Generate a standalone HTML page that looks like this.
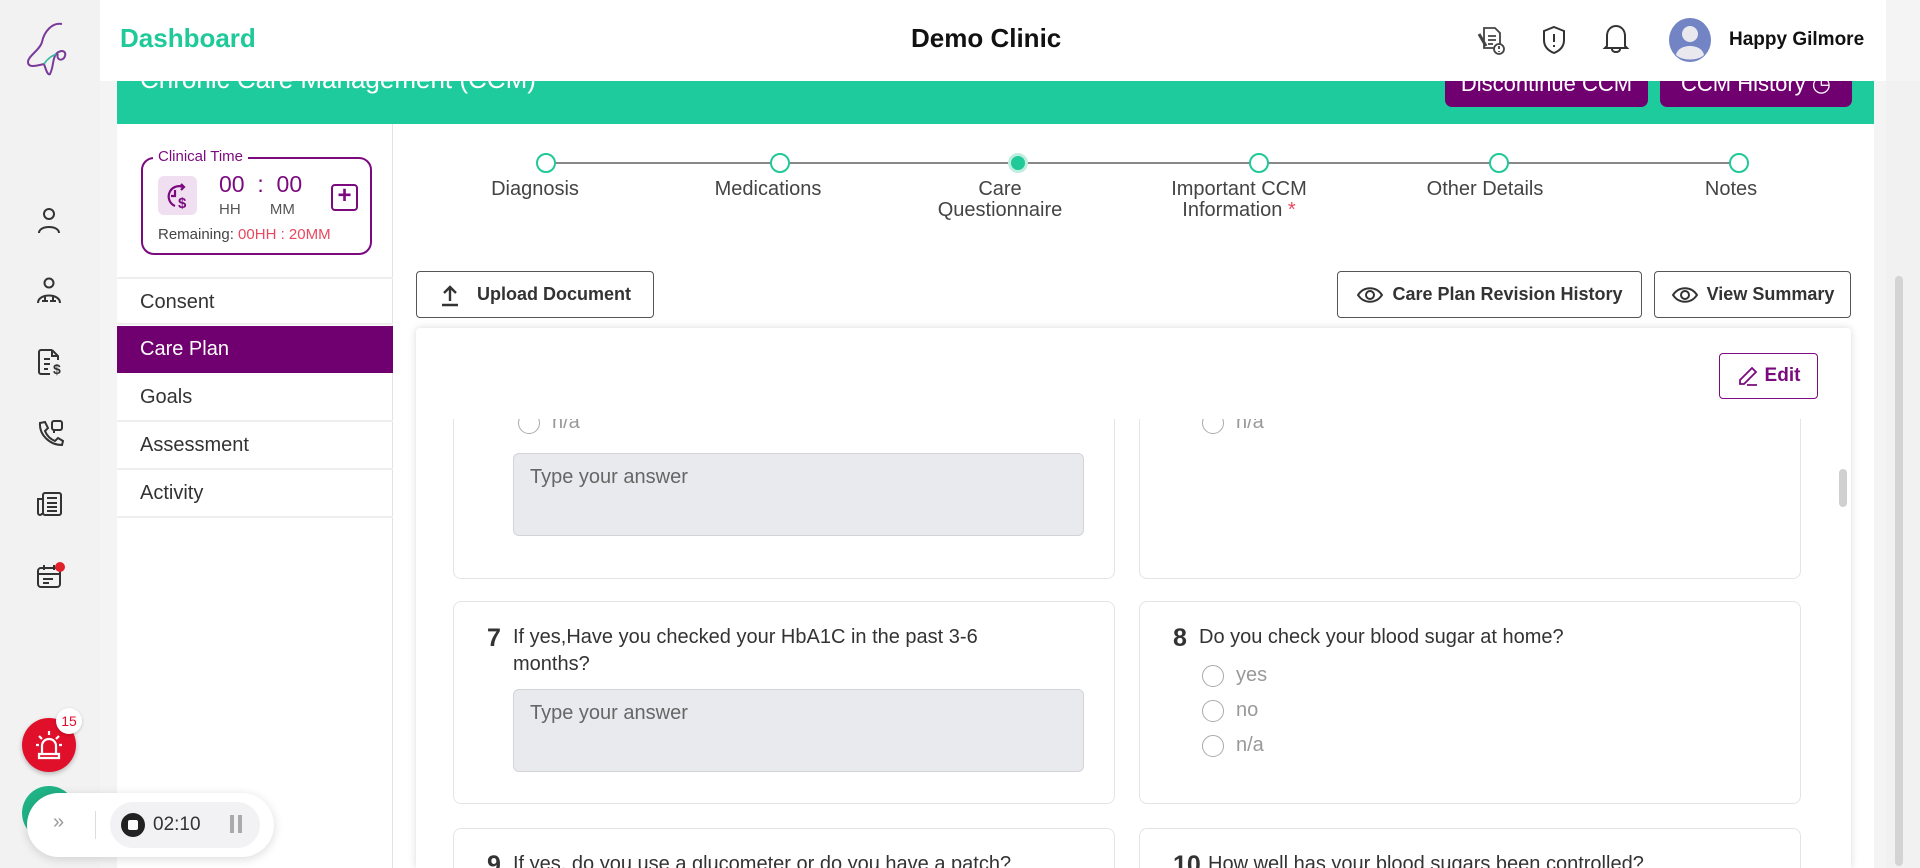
<!DOCTYPE html>
<html style="overflow:hidden"><head><meta charset="utf-8"><style>
*{box-sizing:border-box;margin:0;padding:0}
html,body{overflow:hidden}
body{width:1920px;height:868px;overflow:hidden;background:#f4f4f5;font-family:"Liberation Sans",sans-serif;position:relative;color:#333}
.a{position:absolute}
.side{left:0;top:0;width:100px;height:868px;background:#f2f2f2}
.hdr{left:100px;top:0;width:1786px;height:81px;background:#fff;z-index:5}
.band{left:117px;top:50px;width:1757px;height:74px;background:#1ecb9c}
.pbtn{background:#700070;color:#fff;border-radius:0 0 7px 7px;font-size:22px;text-align:center;line-height:28px}
.main{left:117px;top:124px;width:1757px;height:744px;background:#fff}
.lp{left:117px;top:124px;width:276px;height:744px;border-right:1px solid #e3e3e3;background:#fff}
.mi{left:117px;width:276px;height:48px;border-bottom:2px solid #eee;font-size:20px;line-height:46px;padding-left:23px;color:#333}
.step{top:153px;width:20px;height:20px;border:2px solid #20c997;border-radius:50%;background:#fff}
.lbl{font-size:20px;color:#444;text-align:center;line-height:21px;width:240px}
.obtn{border:1.5px solid #555;border-radius:4px;background:#fff;font-weight:bold;font-size:18px;color:#333;display:flex;align-items:center;justify-content:center;gap:8px}
.card{background:#fff;border:1px solid #e4e4e4;border-radius:8px}
.ta{background:#e9eaee;border:1px solid #d4d4d8;border-radius:6px;font-size:20px;color:#666;padding:12px 16px}
.q{font-size:20px;color:#333;line-height:27px}
.qn{font-size:25px;font-weight:bold;color:#333}
.rd{width:22px;height:22px;border:1.5px solid #aaa;border-radius:50%;background:#fff}
.rl{font-size:20px;color:#999}
</style></head><body>
<div class="a side"></div>
<svg class="a" style="left:22px;top:18px" width="56" height="60" viewBox="0 0 56 60"><path d="M40 6 C30 4 22 14 20 24 C18 32 6 38 6 44 C6 50 14 48 22 46 C24 52 26 58 28 56 C32 48 30 42 34 36 C40 30 46 34 42 40 C38 44 34 40 36 36" fill="none" stroke="#7a3a9a" stroke-width="2"/><path d="M22 46 C26 40 30 38 34 36" fill="none" stroke="#3ab8a0" stroke-width="1.6"/></svg>
<svg class="a" style="left:36px;top:207px" width="26" height="28" viewBox="0 0 26 28" fill="none" stroke="#333" stroke-width="2"><circle cx="13" cy="7" r="5"/><path d="M3 26 C3 18 23 18 23 26"/></svg>
<svg class="a" style="left:36px;top:277px" width="26" height="28" viewBox="0 0 26 28" fill="none" stroke="#333" stroke-width="2"><circle cx="13" cy="6" r="4.5"/><path d="M2 26 C2 16 24 16 24 26 M9 18 v6 M17 18 v6 M6 24 h6 M14 24 h6"/></svg>
<svg class="a" style="left:36px;top:348px" width="28" height="28" viewBox="0 0 28 28" fill="none" stroke="#333" stroke-width="2"><path d="M16 2 H5 a2 2 0 0 0 -2 2 V24 a2 2 0 0 0 2 2 H14 M16 2 L22 8 V12 M16 2 V8 H22 M8 11 h6 M8 16 h6 M8 21 h4"/><text x="17" y="26" font-size="14" font-weight="bold" fill="#333" stroke="none" font-family="Liberation Sans">$</text></svg>
<svg class="a" style="left:36px;top:419px" width="28" height="28" viewBox="0 0 28 28" fill="none" stroke="#333" stroke-width="2"><path d="M4 4 L9 3 L12 9 L9 12 C11 17 14 20 19 22 L22 19 L27 22 L26 26 C14 26 3 16 4 4Z"/><rect x="16" y="2" width="10" height="9" rx="2"/><path d="M18 11 v3"/></svg>
<svg class="a" style="left:35px;top:490px" width="28" height="28" viewBox="0 0 28 28" fill="none" stroke="#333" stroke-width="2"><rect x="8" y="3" width="18" height="22" rx="2"/><path d="M8 9 H3 V23 a2 2 0 0 0 4 0 M12 8 h10 M12 13 h10 M12 17 h10 M12 21 h10"/></svg>
<svg class="a" style="left:35px;top:561px" width="30" height="30" viewBox="0 0 30 30" fill="none" stroke="#333" stroke-width="2"><rect x="3" y="7" width="22" height="19" rx="3"/><path d="M3 13 h22 M9 4 v5 M19 4 v5 M8 18 h10 M8 22 h6"/><circle cx="25" cy="6" r="5" fill="#e0202b" stroke="none"/></svg>
<div class="a hdr">
 <div class="a" style="left:20px;top:23px;font-size:26px;font-weight:bold;color:#1fc99a">Dashboard</div>
 <div class="a" style="left:811px;top:23px;font-size:26px;font-weight:bold;color:#111">Demo Clinic</div>
 <svg class="a" style="left:1376px;top:24px" width="30" height="32" viewBox="0 0 30 32" fill="none" stroke="#444" stroke-width="1.8"><path d="M8 4 H19 L24 9 V24 H8 Z M12 12 h8 M12 16 h8 M12 20 h5"/><path d="M3 10 L10 22" stroke-width="3"/><circle cx="23" cy="25" r="5" fill="#fff"/><path d="M23 22 v3 M23 27 v1"/></svg>
 <svg class="a" style="left:1441px;top:24px" width="26" height="32" viewBox="0 0 26 32" fill="none" stroke="#333" stroke-width="2"><path d="M13 3 L23 7 V16 C23 23 18 27 13 29 C8 27 3 23 3 16 V7 Z"/><path d="M13 10 v8 M13 21 v2"/></svg>
 <svg class="a" style="left:1501px;top:22px" width="30" height="34" viewBox="0 0 30 34" fill="none" stroke="#333" stroke-width="2"><path d="M6 24 V14 C6 8 10 4 15 4 C20 4 24 8 24 14 V24 L26 26 H4 Z M11 27 C11 31 19 31 19 27"/></svg>
 <svg class="a" style="left:1568px;top:17px" width="44" height="46" viewBox="0 0 44 46"><ellipse cx="22" cy="23" rx="21" ry="22" fill="#7284c4"/><circle cx="22" cy="17" r="8" fill="#e8e8ee"/><path d="M8 38 C10 26 34 26 36 38 C30 44 14 44 8 38Z" fill="#e8e8ee"/></svg>
 <div class="a" style="left:1629px;top:29px;font-size:19px;font-weight:bold;color:#111">Happy Gilmore</div>
</div>
<div class="a" style="left:1886px;top:81px;width:34px;height:787px;background:#f1f1f1"></div>
<div class="a" style="left:1895px;top:276px;width:8px;height:590px;background:#d4d4d4;border-radius:4px"></div>
<div class="a band"><div class="a" style="left:23px;top:14px;font-size:26px;color:#fff">Chronic Care Management (CCM)</div></div>
<div class="a pbtn" style="left:1445px;top:60px;width:203px;height:47px;padding-top:10px">Discontinue CCM</div>
<div class="a pbtn" style="left:1660px;top:60px;width:192px;height:47px;padding-top:10px">CCM History &#9719;</div>
<div class="a main"></div>
<div class="a lp"></div>
<div class="a" style="left:141px;top:157px;width:231px;height:98px;border:2px solid #7b0a7f;border-radius:13px"></div>
<div class="a" style="left:153px;top:148px;background:#fff;padding:0 5px;font-size:15px;color:#7b0a7f">Clinical Time</div>
<div class="a" style="left:158px;top:176px;width:39px;height:39px;background:#f0dff0;border-radius:6px"></div>
<svg class="a" style="left:163px;top:181px" width="30" height="30" viewBox="0 0 30 30" fill="none" stroke="#7b0a7f" stroke-width="2.2"><path d="M20 6 A10 10 0 1 0 12 25 M18 3 L21 6 L18 9 M12 9 v6 h-4"/><text x="15" y="27" font-size="15" font-weight="bold" fill="#7b0a7f" stroke="none" font-family="Liberation Sans">$</text></svg>
<div class="a" style="left:219px;top:171px;font-size:23px;color:#7b0a7f">00&nbsp;&nbsp;:&nbsp;&nbsp;00</div>
<div class="a" style="left:219px;top:201px;font-size:15px;color:#555">HH&nbsp;&nbsp;&nbsp;&nbsp;&nbsp;&nbsp;&nbsp;MM</div>
<div class="a" style="left:331px;top:184px;width:27px;height:27px;border:2.5px solid #7b0a7f;border-radius:4px;color:#7b0a7f;font-size:24px;line-height:20px;text-align:center;font-weight:bold">+</div>
<div class="a" style="left:158px;top:226px;font-size:15px;color:#444">Remaining: <span style="color:#e8485f">00HH : 20MM</span></div>
<div class="a mi" style="top:277px;border-top:2px solid #eee">Consent</div>
<div class="a mi" style="top:326px;background:#700070;color:#fff;border:none;height:47px">Care Plan</div>
<div class="a mi" style="top:374px">Goals</div>
<div class="a mi" style="top:422px">Assessment</div>
<div class="a mi" style="top:470px">Activity</div>
<div class="a" style="left:546px;top:162px;width:1193px;height:2px;background:#888"></div>
<div class="a step" style="left:536px"></div>
<div class="a step" style="left:770px"></div>
<div class="a step" style="left:1008px;background:#20c997;border-color:#bfeedf;border-width:3px"></div>
<div class="a step" style="left:1249px"></div>
<div class="a step" style="left:1489px"></div>
<div class="a step" style="left:1729px"></div>
<div class="a lbl" style="left:415px;top:179px">Diagnosis</div>
<div class="a lbl" style="left:648px;top:179px">Medications</div>
<div class="a lbl" style="left:880px;top:179px">Care<br>Questionnaire</div>
<div class="a lbl" style="left:1119px;top:179px">Important CCM<br>Information <span style="color:#e8485f">*</span></div>
<div class="a lbl" style="left:1365px;top:179px">Other Details</div>
<div class="a lbl" style="left:1611px;top:179px">Notes</div>
<div class="a obtn" style="left:416px;top:271px;width:238px;height:47px"><svg width="22" height="24" viewBox="0 0 22 24" fill="none" stroke="#333" stroke-width="2.4"><path d="M11 18 V4 M5 10 L11 4 L17 10 M3 22 h16"/></svg><span style="margin-left:8px">Upload Document</span></div>
<div class="a obtn" style="left:1337px;top:271px;width:305px;height:47px"><svg width="28" height="20" viewBox="0 0 28 20" fill="none" stroke="#333" stroke-width="2"><path d="M2 10 C8 1 20 1 26 10 C20 19 8 19 2 10Z"/><circle cx="14" cy="10" r="4"/></svg>Care Plan Revision History</div>
<div class="a obtn" style="left:1654px;top:271px;width:197px;height:47px"><svg width="28" height="20" viewBox="0 0 28 20" fill="none" stroke="#333" stroke-width="2"><path d="M2 10 C8 1 20 1 26 10 C20 19 8 19 2 10Z"/><circle cx="14" cy="10" r="4"/></svg>View Summary</div>
<div class="a" style="left:416px;top:328px;width:1435px;height:540px;background:#fff;box-shadow:0 0 8px rgba(0,0,0,.15);border-radius:4px 4px 0 0;overflow:hidden">
 <div class="a" style="left:1303px;top:25px;width:99px;height:46px;border:1.5px solid #7b0a7f;border-radius:4px;color:#7b0a7f;font-weight:bold;font-size:19px;display:flex;align-items:center;justify-content:center;gap:6px"><svg width="22" height="22" viewBox="0 0 22 22" fill="none" stroke="#7b0a7f" stroke-width="1.8"><path d="M15 3 L19 7 L7 19 L3 19 L3 15 Z M10 20 h10"/></svg>Edit</div>
 <div class="a" style="left:0;top:91px;width:1435px;height:449px;overflow:hidden">
  <div class="a card" style="left:37px;top:-60px;width:662px;height:220px">
   <div class="a rd" style="left:64px;top:52px"></div><div class="a rl" style="left:98px;top:51px">n/a</div>
   <div class="a ta" style="left:59px;top:93px;width:571px;height:83px">Type your answer</div>
  </div>
  <div class="a card" style="left:723px;top:-60px;width:662px;height:220px">
   <div class="a rd" style="left:62px;top:52px"></div><div class="a rl" style="left:96px;top:51px">n/a</div>
  </div>
  <div class="a card" style="left:37px;top:182px;width:662px;height:203px">
   <div class="a qn" style="left:33px;top:22px">7</div>
   <div class="a q" style="left:59px;top:22px;width:480px">If yes,Have you checked your HbA1C in the past 3-6 months?</div>
   <div class="a ta" style="left:59px;top:87px;width:571px;height:83px">Type your answer</div>
  </div>
  <div class="a card" style="left:723px;top:182px;width:662px;height:203px">
   <div class="a qn" style="left:33px;top:22px">8</div>
   <div class="a q" style="left:59px;top:22px">Do you check your blood sugar at home?</div>
   <div class="a rd" style="left:62px;top:63px"></div><div class="a rl" style="left:96px;top:62px">yes</div>
   <div class="a rd" style="left:62px;top:98px"></div><div class="a rl" style="left:96px;top:97px">no</div>
   <div class="a rd" style="left:62px;top:133px"></div><div class="a rl" style="left:96px;top:132px">n/a</div>
  </div>
  <div class="a card" style="left:37px;top:409px;width:662px;height:203px">
   <div class="a qn" style="left:33px;top:22px">9</div>
   <div class="a q" style="left:59px;top:22px">If yes, do you use a glucometer or do you have a patch?</div>
  </div>
  <div class="a card" style="left:723px;top:409px;width:662px;height:203px">
   <div class="a qn" style="left:33px;top:22px">10</div>
   <div class="a q" style="left:68px;top:22px">How well has your blood sugars been controlled?</div>
  </div>
  <div class="a" style="left:1423px;top:50px;width:8px;height:38px;background:#d0d0d0;border-radius:4px"></div>
 </div>
</div>
<div class="a" style="left:22px;top:786px;width:54px;height:54px;border-radius:50%;background:#1fb386"></div>
<div class="a" style="left:22px;top:718px;width:54px;height:54px;border-radius:50%;background:#e0102b;box-shadow:0 2px 5px rgba(0,0,0,.25)"></div>
<svg class="a" style="left:33px;top:727px" width="32" height="34" viewBox="0 0 32 34" fill="none" stroke="#fff" stroke-width="2.2"><path d="M9 27 V19 C9 15 12 12 16 12 C20 12 23 15 23 19 V27 M6 27 h20 v4 h-20z M16 4 v4 M6 9 l3 3 M26 9 l-3 3 M3 18 h3 M26 18 h3"/></svg>
<div class="a" style="left:56px;top:708px;width:26px;height:26px;border-radius:50%;background:#fff;color:#e0102b;font-size:14px;text-align:center;line-height:26px;box-shadow:0 1px 3px rgba(0,0,0,.2)">15</div>
<div class="a" style="left:27px;top:793px;width:247px;height:64px;border-radius:32px;background:#fff;box-shadow:0 2px 10px rgba(0,0,0,.15)">
 <div class="a" style="left:26px;top:18px;font-size:20px;color:#999">&raquo;</div>
 <div class="a" style="left:68px;top:18px;width:1px;height:28px;background:#ddd"></div>
 <div class="a" style="left:83px;top:9px;width:150px;height:46px;border-radius:23px;background:#f2f2f4"></div>
 <div class="a" style="left:94px;top:20px;width:24px;height:24px;border-radius:50%;background:#222"></div>
 <div class="a" style="left:101px;top:27px;width:10px;height:10px;border-radius:2px;background:#fff"></div>
 <div class="a" style="left:126px;top:21px;font-size:19px;color:#333">02:10</div>
 <div class="a" style="left:203px;top:22px;width:4px;height:18px;background:#aaa"></div>
 <div class="a" style="left:211px;top:22px;width:4px;height:18px;background:#aaa"></div>
</div>
</body></html>
